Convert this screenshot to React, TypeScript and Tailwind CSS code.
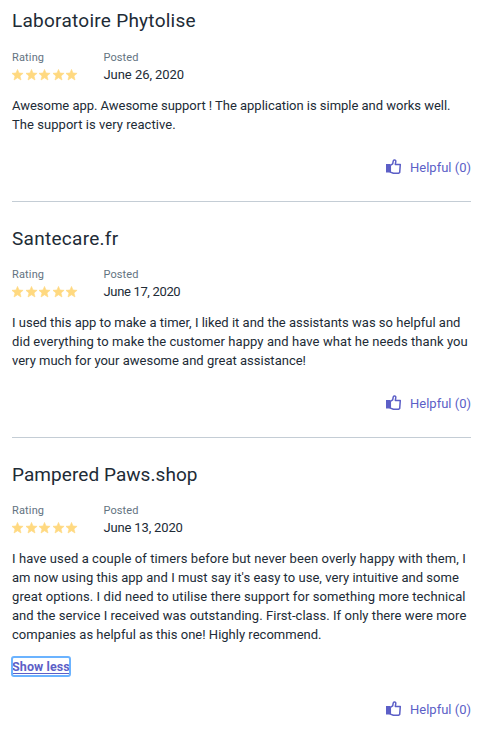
type Line = { text: string; tracking: string };
type Review = {
  shop: string;
  titleTracking: string;
  date: string;
  dateTracking: string;
  lines: Line[];
  expanded?: boolean;
};

const reviews: Review[] = [
  {
    shop: "Laboratoire Phytolise",
    titleTracking: "tracking-[0.26px]",
    date: "June 26, 2020",
    dateTracking: "tracking-[-0.05px]",
    lines: [
      { text: "Awesome app. Awesome support ! The application is simple and works well.", tracking: "tracking-[-0.025px]" },
      { text: "The support is very reactive.", tracking: "tracking-[0.05px]" },
    ],
  },
  {
    shop: "Santecare.fr",
    titleTracking: "tracking-[0.28px]",
    date: "June 17, 2020",
    dateTracking: "tracking-[-0.34px]",
    lines: [
      { text: "I used this app to make a timer, I liked it and the assistants was so helpful and", tracking: "tracking-[0.005px]" },
      { text: "did everything to make the customer happy and have what he needs thank you", tracking: "tracking-[0.08px]" },
      { text: "very much for your awesome and great assistance!", tracking: "tracking-[0.005px]" },
    ],
  },
  {
    shop: "Pampered Paws.shop",
    titleTracking: "tracking-[0.06px]",
    date: "June 13, 2020",
    dateTracking: "tracking-[-0.16px]",
    expanded: true,
    lines: [
      { text: "I have used a couple of timers before but never been overly happy with them, I", tracking: "tracking-[0.09px]" },
      { text: "am now using this app and I must say it's easy to use, very intuitive and some", tracking: "tracking-[0.035px]" },
      { text: "great options. I did need to utilise there support for something more technical", tracking: "tracking-[0.1px]" },
      { text: "and the service I received was outstanding. First-class. If only there were more", tracking: "tracking-[0.05px]" },
      { text: "companies as helpful as this one! Highly recommend.", tracking: "tracking-[0.015px]" },
    ],
  },
];

function Stars() {
  return (
    <div className="flex h-[17px] items-center gap-[1.5px]">
      {[0, 1, 2, 3, 4].map((i) => (
        <svg key={i} className="h-3 w-3" viewBox="0 0 12 12" fill="#ffd980" stroke="#ffd980" strokeWidth="0.6" strokeLinejoin="round">
          <path d="M5.5 .4 7 4l4.1.3L8 6.9l1 4.1-3.5-2.2L2 11l1-4.1L-.1 4.3 4 4Z" />
        </svg>
      ))}
    </div>
  );
}

function Thumb() {
  return (
    <svg className="mb-[3px] h-4 w-4" viewBox="0 0 16 16" fill="none" stroke="#5c5fc7" strokeWidth="1.5" strokeLinejoin="round">
      <path d="M0 5h4.4v8.5H0z" fill="#5c5fc7" stroke="none" />
      <path d="M4.3 6.4 6.7 4.8 7.2 2.2C7.4 1.2 8.1.8 8.9 1s1.1.8.9 1.7L9.3 5.4h5l-.6 8-1 .9H7.4L4.3 13.1Z" />
    </svg>
  );
}

function ReviewItem({ review }: { review: Review }) {
  return (
    <article className="border-t border-[#c4cdd5] pt-[22px] pb-[23px] first:border-t-0 first:pt-[6px] first:[&_h3]:mb-4">
      <h3 className={`mb-[15px] h-7 whitespace-nowrap text-[19px] leading-[30px] ${review.titleTracking}`}>{review.shop}</h3>
      <div className="flex">
        <div className="w-[91.5px]">
          <div className="h-4 text-[11px] leading-4 tracking-[0.15px] text-[#637381]">Rating</div>
          <Stars />
        </div>
        <div>
          <div className="h-4 text-[11px] leading-4 tracking-[0.1px] text-[#637381]">Posted</div>
          <div className={`h-[18px] text-[13px] leading-[18px] ${review.dateTracking}`}>{review.date}</div>
        </div>
      </div>
      <div className="mt-[12px] text-[13px] leading-[19px]">
        {review.lines.map((line) => (
          <p key={line.text} className={`whitespace-nowrap ${line.tracking}`}>{line.text}</p>
        ))}
      </div>
      {review.expanded && (
        <div className="-mb-px mt-[13px] flex h-5">
          <button className="h-[19px] w-[58px] whitespace-nowrap rounded-[2px] text-left text-[12.5px] font-bold leading-[19px] tracking-[0.1px] text-[#5c5fc7] underline underline-offset-2 outline-2 -outline-offset-1 outline-[#6bb3ff]">Show less</button>
        </div>
      )}
      <div className="mt-6 flex h-5 items-center justify-end gap-2 text-[13px] leading-5 text-[#5c5fc7]">
        <Thumb />
        <span className="w-[61px] whitespace-nowrap">Helpful (0)</span>
      </div>
    </article>
  );
}

export default function App() {
  return (
    <main className="h-[735px] w-[496px] overflow-hidden bg-white pl-3 pr-[25px] font-['Roboto',sans-serif] text-[#212b36]">
      {reviews.map((review) => (
        <ReviewItem key={review.shop} review={review} />
      ))}
    </main>
  );
}
